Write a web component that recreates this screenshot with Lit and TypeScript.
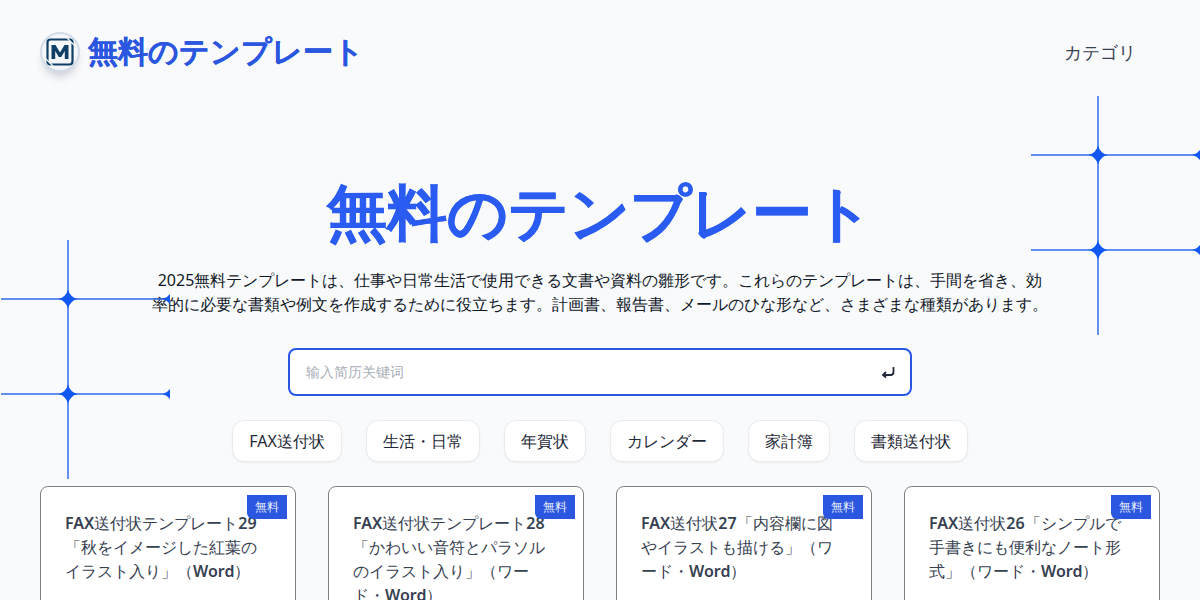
import { LitElement, html, css, svg } from 'lit'
import { customElement } from 'lit/decorators.js'

const tags = ['FAX送付状', '生活・日常', '年賀状', 'カレンダー', '家計簿', '書類送付状']

const cards = [
	html`<b>FAX</b>送付状テンプレート<b>29</b>「秋をイメージした紅葉のイラスト入り」（<b>Word</b>）`,
	html`<b>FAX</b>送付状テンプレート<b>28</b>「かわいい音符とパラソルのイラスト入り」（ワード・<b>Word</b>）`,
	html`<b>FAX</b>送付状<b>27</b>「内容欄に図やイラストも描ける」（ワード・<b>Word</b>）`,
	html`<b>FAX</b>送付状<b>26</b>「シンプルで手書きにも便利なノート形式」（ワード・<b>Word</b>）`,
]

// four-point star where the decoration lines cross
const star = (x: number, y: number) =>
	svg`<path d="M${x} ${y - 9.5} Q${x + 2} ${y - 2} ${x + 9.5} ${y} Q${x + 2} ${y + 2} ${x} ${y + 9.5} Q${x - 2} ${y + 2} ${x - 9.5} ${y} Q${x - 2} ${y - 2} ${x} ${y - 9.5}Z" fill="#1257f0"/>`

const crosses = svg`
	<path d="M68 1V240" stroke="#2563eb" stroke-width="1.4" fill="none"/>
	<path d="M1 60H170M1 155H170" stroke="#2f6bea" stroke-width="1.4" fill="none"/>
	${star(68, 60)}${star(68, 155)}${star(172, 60)}${star(172, 155)}
`

@customElement('app-root')
export class AppRoot extends LitElement {
	static styles = css`
		:host {
			display: block;
			height: 600px;
			overflow: hidden;
			position: relative;
			background: #f9fafc;
			color: #1f2937;
			font-family: 'Noto Sans', sans-serif;
		}
		.deco {
			position: absolute;
			width: 170px;
			height: 241px;
		}
		.deco.left {
			left: 0;
			top: 239px;
		}
		.deco.right {
			left: 1030px;
			top: 95px;
		}
		header {
			display: flex;
			align-items: center;
			justify-content: space-between;
			padding: 32px 64px 0 40px;
			height: 40px;
		}
		.brand {
			display: flex;
			align-items: center;
			gap: 8px;
			font-size: 30px;
			line-height: 40px;
			font-weight: 700;
			color: #2a56e0;
		}
		.brand-name {
			padding-bottom: 2px;
			-webkit-text-stroke: 0.3px #2a56e0;
		}
		.logo {
			width: 40px;
			height: 40px;
			border-radius: 50%;
			box-sizing: border-box;
			border: 2px solid #d3dce6;
			background: #f4f7fa;
			box-shadow: 0 8px 10px -4px rgba(40, 60, 90, 0.25);
			display: flex;
			align-items: center;
			justify-content: center;
		}
		.nav {
			font-size: 18px;
			color: #374151;
		}
		main {
			padding: 0 40px;
		}
		h1 {
			margin: 0;
			padding-top: 99px;
			text-align: center;
			font-size: 60px;
			line-height: 80px;
			font-weight: 700;
			color: #2a5cf2;
			-webkit-text-stroke: 0.6px #2a5cf2;
		}
		.intro {
			width: 896px;
			margin: 17px auto 0;
			text-align: center;
			font-size: 16px;
			line-height: 24px;
			color: #111827;
		}
		.search {
			width: 624px;
			height: 48px;
			box-sizing: border-box;
			margin: 32px auto 0;
			padding: 0 14px 0 16px;
			display: flex;
			align-items: center;
			justify-content: space-between;
			background: #fff;
			border: 2px solid #2a56e0;
			border-radius: 8px;
			font-size: 14px;
			color: #a9afb8;
		}
		.tags {
			display: flex;
			justify-content: center;
			gap: 24px;
			margin-top: 24px;
		}
		.tag {
			height: 42px;
			box-sizing: border-box;
			padding: 0 16px;
			display: flex;
			align-items: center;
			font-size: 16px;
			color: #1f2937;
			background: #fff;
			border: 1px solid #e9ebef;
			border-radius: 12px;
			box-shadow: 0 1px 2px rgba(0, 0, 0, 0.05);
		}
		.cards {
			display: grid;
			grid-template-columns: repeat(4, 256px);
			gap: 32px;
			margin-top: 24px;
		}
		.card {
			position: relative;
			box-sizing: border-box;
			height: 180px;
			padding: 24px;
			background: #fff;
			border: 1px solid #7b7f86;
			border-radius: 8px;
			font-size: 16px;
			line-height: 24px;
			color: #374151;
		}
		.card b {
			font-weight: 600;
		}
		.badge {
			position: absolute;
			top: 8px;
			right: 8px;
			width: 40px;
			height: 24px;
			display: flex;
			align-items: center;
			justify-content: center;
			background: #2a56e0;
			border-bottom-left-radius: 6px;
			color: #e8edfc;
			font-size: 12px;
		}
	`

	render() {
		return html`
			<header>
				<div class="brand">
					<span class="logo">
						<svg width="30" height="30" viewBox="0 0 30 30">
							<rect x="2.500" y="2.500" width="25" height="25" rx="3" fill="none" stroke="#0f3f66" stroke-width="2.200" />
							<path d="M22 1L29 8M1 22L8 29" fill="none" stroke="#f4f7fa" stroke-width="1.200" />
							<path d="M6.500 22V8H10.500L15 15.500L19.500 8H23.500V22H19.800V14L16.200 20H13.800L10.200 14V22Z" fill="#0f3f66" />
						</svg>
					</span>
					<span class="brand-name">無料のテンプレート</span>
				</div>
				<div class="nav">カテゴリ</div>
			</header>
			<main>
				<h1>無料のテンプレート</h1>
				<p class="intro">
					2025無料テンプレートは、仕事や日常生活で使用できる文書や資料の雛形です。これらのテンプレートは、手間を省き、効率的に必要な書類や例文を作成するために役立ちます。計画書、報告書、メールのひな形など、さまざまな種類があります。
				</p>
				<div class="search">
					<span>输入简历关键词</span>
					<svg width="16" height="16" viewBox="0 0 16 16" fill="none" stroke="#1f2937" stroke-width="1.800">
						<path d="M13.500 3V8Q13.500 11 10.500 11H3M6 8L3 11L6 13.500" />
					</svg>
				</div>
				<div class="tags">${tags.map((t) => html`<div class="tag">${t}</div>`)}</div>
				<div class="cards">
					${cards.map((c) => html`<div class="card">${c}<span class="badge">無料</span></div>`)}
				</div>
			</main>
			<svg class="deco left" viewBox="0 0 170 241">${crosses}</svg>
			<svg class="deco right" viewBox="0 0 170 241">${crosses}</svg>
		`
	}
}
